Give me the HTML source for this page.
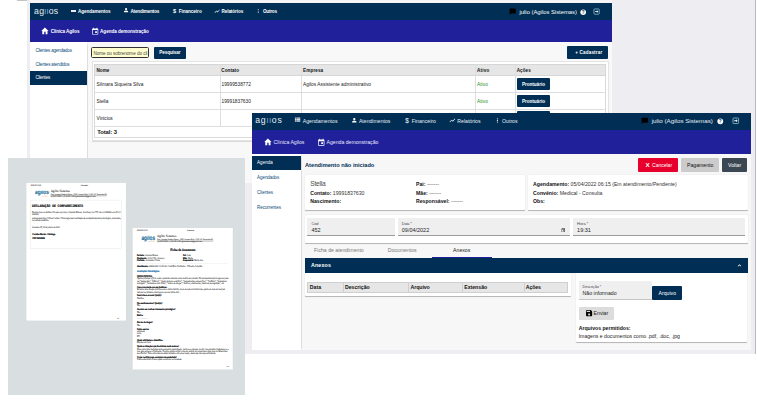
<!DOCTYPE html>
<html lang="pt-BR"><head><meta charset="utf-8"><title>Agilos</title>
<style>
html,body{margin:0;padding:0;background:#fff;}
body{width:757px;height:404px;position:relative;overflow:hidden;font-family:"Liberation Sans",sans-serif;}
main{display:block;position:absolute;left:0;top:0;width:757px;height:404px;overflow:hidden;}
main>div,main>svg{position:absolute;}
.t{white-space:nowrap;}
svg{overflow:visible;}
</style></head><body><main>
<div style="left:27.20px;top:0.00px;width:728.50px;height:353.70px;background:#ededf2;"></div>
<div style="left:755.00px;top:0.00px;width:0.90px;height:353.70px;background:#b9b9bd;"></div>
<div style="left:17.40px;top:0.00px;width:9.80px;height:1.20px;background:#c4c4c4;"></div>
<div style="left:30.00px;top:0.00px;width:582.00px;height:2.70px;background:#f5f5f8;"></div>
<div style="left:30.00px;top:3.00px;width:582.00px;height:180.00px;background:#f8f8f8;"></div>
<div style="left:30.00px;top:3.00px;width:582.00px;height:17.00px;background:#002e54;"></div>
<div style="left:30.00px;top:20.00px;width:582.00px;height:21.70px;background:#20209a;"></div>
<div style="left:30.00px;top:41.70px;width:57.40px;height:141.30px;background:#fff;box-shadow:0.6px 0 0.8px rgba(0,0,0,.10);"></div>
<div style="left:34.00px;top:9.13px;width:34.8px;height:7.48px;overflow:hidden"><div class="t" style="position:absolute;left:0;top:-3.13px;line-height:10.00px;font-size:8.7px;color:#e6edf3;font-weight:normal;letter-spacing:0.3px"><span>ag</span><span style="color:#86aacb">il</span><span>os</span></div></div>
<div style="left:70.60px;top:9.70px;width:5.60px;height:2.00px;background:#e8eef4;"></div>
<div class="t" style="left:78.00px;top:9.00px;line-height:5.00px;font-size:4.6px;color:#fff;font-weight:bold;letter-spacing:-0.062px;">Agendamentos</div>
<svg style="left:122.60px;top:7.30px;" width="6.20" height="6.20" viewBox="0 0 24 24"><path fill="#fff" d="M12 12c2.21 0 4-1.79 4-4s-1.790-4-4-4-4 1.790-4 4 1.790 4 4 4zm0 2c-2.670 0-8 1.340-8 4v2h16v-2c0-2.660-5.330-4-8-4z"/></svg>
<div class="t" style="left:130.40px;top:9.00px;line-height:5.00px;font-size:4.6px;color:#fff;font-weight:bold;letter-spacing:-0.149px;">Atendimentos</div>
<div class="t" style="left:74.50px;width:200px;text-align:center;top:8.00px;line-height:6.00px;font-size:5.6px;color:#fff;font-weight:bold;">$</div>
<div class="t" style="left:178.70px;top:9.00px;line-height:5.00px;font-size:4.6px;color:#fff;font-weight:bold;letter-spacing:-0.026px;">Financeiro</div>
<svg style="left:213.60px;top:7.60px;" width="6.40" height="6.40" viewBox="0 0 24 24"><path fill="#fff" d="M3.5 18.490l6-6.010 4 4L22 6.920l-1.410-1.410-7.090 7.970-4-4L2 16.990z"/></svg>
<div class="t" style="left:221.50px;top:9.00px;line-height:5.00px;font-size:4.6px;color:#fff;font-weight:bold;letter-spacing:-0.085px;">Relatórios</div>
<svg style="left:255.30px;top:7.70px;" width="6.40" height="6.40" viewBox="0 0 24 24"><path fill="#fff" d="M12 8c1.100 0 2-.9 2-2s-.9-2-2-2-2 .9-2 2 .9 2 2 2zm0 2c-1.100 0-2 .9-2 2s.9 2 2 2 2-.9 2-2-.9-2-2-2zm0 6c-1.100 0-2 .9-2 2s.9 2 2 2 2-.9 2-2-.9-2-2-2z"/></svg>
<div class="t" style="left:263.00px;top:9.00px;line-height:5.00px;font-size:4.6px;color:#fff;font-weight:bold;letter-spacing:-0.212px;">Outros</div>
<svg style="left:509.10px;top:8.10px;" width="7.40" height="7.40" viewBox="0 0 24 24"><path fill="#000" d="M20 2H4c-1.100 0-2 .9-2 2v18l4-4h14c1.100 0 2-.9 2-2V4c0-1.100-.9-2-2-2z"/></svg>
<div class="t" style="left:519.50px;top:9.00px;line-height:6.00px;font-size:5.84px;color:#fff;font-weight:normal;letter-spacing:0.003px;">julio (Agilos Sistemas)</div>
<svg style="left:580.00px;top:8.70px;" width="6.40" height="6.40" viewBox="0 0 24 24"><circle cx="12" cy="12" r="10.5" fill="#fff"/><text x="12" y="18" font-size="17" font-weight="bold" text-anchor="middle" fill="#002e54" font-family="Liberation Sans, sans-serif">?</text></svg>
<svg style="left:593.40px;top:8.20px;" width="7.20" height="7.20" viewBox="0 0 24 24"><rect x="3.2" y="3.2" width="17.6" height="17.6" rx="2.5" fill="none" stroke="#8fc3d6" stroke-width="2.6"/><path fill="#fff" d="M7 10.500h6V7.500l5 4.500-5 4.500v-3H7z"/></svg>
<svg style="left:41.00px;top:27.30px;" width="7.80" height="7.80" viewBox="0 0 24 24"><path fill="#fff" d="M12 1.500L0.800 12H4v10.500h5.800v-7.500h4.400v7.500H20V12h3.200z"/></svg>
<div class="t" style="left:50.70px;top:29.00px;line-height:5.00px;font-size:4.6px;color:#fff;font-weight:bold;letter-spacing:-0.109px;">Clínica Agilos</div>
<svg style="left:90.85px;top:26.95px;" width="8.30" height="8.30" viewBox="0 0 24 24"><path fill="#fff" d="M19 4h-1V2h-2v2H8V2H6v2H5c-1.110 0-2 .9-2 2v14c0 1.100.89 2 2 2h14c1.100 0 2-.9 2-2V6c0-1.100-.9-2-2-2zm0 16H5V9h14v11zm-2-3h-5v-5h5v5z" fill-rule="evenodd"/></svg>
<div class="t" style="left:100.10px;top:29.00px;line-height:5.00px;font-size:4.6px;color:#fff;font-weight:bold;letter-spacing:-0.041px;">Agenda demonstração</div>
<div class="t" style="left:35.40px;top:48.00px;line-height:5.00px;font-size:4.5px;color:#0b4a78;font-weight:normal;letter-spacing:-0.193px;">Clientes agendados</div>
<div class="t" style="left:35.40px;top:62.00px;line-height:5.00px;font-size:4.5px;color:#0b4a78;font-weight:normal;letter-spacing:-0.172px;">Clientes atendidos</div>
<div style="left:30.00px;top:71.20px;width:57.40px;height:13.60px;background:#002e54;"></div>
<div class="t" style="left:35.40px;top:75.00px;line-height:5.00px;font-size:4.5px;color:#fff;font-weight:normal;letter-spacing:-0.209px;">Clientes</div>
<div style="left:91.10px;top:47.40px;width:57.80px;height:10.50px;background:#ffffd0;border:0.7px solid #333;border-radius:1.6px;box-sizing:border-box;"></div>
<div class="t" style="left:93.50px;top:51.00px;line-height:5.00px;font-size:4.6px;color:#444;font-weight:normal;letter-spacing:-0.044px;">Nome ou sobrenome do cli</div>
<div style="left:153.70px;top:46.70px;width:32.50px;height:12.30px;background:#002e54;border-radius:1px;"></div>
<div class="t" style="left:159.20px;top:50.00px;line-height:5.00px;font-size:4.6px;color:#fff;font-weight:bold;letter-spacing:-0.071px;">Pesquisar</div>
<div style="left:567.40px;top:46.30px;width:40.80px;height:13.10px;background:#002e54;border-radius:1px;"></div>
<div class="t" style="left:575.30px;top:50.00px;line-height:5.00px;font-size:4.6px;color:#fff;font-weight:bold;letter-spacing:0.148px;">+ Cadastrar</div>
<div style="left:92.00px;top:61.30px;width:517.00px;height:79.90px;background:#fff;border:0.5px solid #e4e4e4;box-sizing:border-box;box-shadow:0 0.5px 0.6px rgba(0,0,0,.12);"></div>
<div style="left:94.30px;top:63.80px;width:511.60px;height:74.60px;background:#fff;border:0.5px solid #dadada;box-sizing:border-box;"></div>
<div style="left:94.30px;top:63.80px;width:511.60px;height:11.90px;background:#e6e6e6;border:0.5px solid #d6d6d6;box-sizing:border-box;"></div>
<div style="left:94.30px;top:92.20px;width:511.60px;height:0.50px;background:#dedede;"></div>
<div style="left:94.30px;top:109.20px;width:511.60px;height:0.50px;background:#dedede;"></div>
<div style="left:94.30px;top:126.20px;width:511.60px;height:0.50px;background:#dedede;"></div>
<div style="left:219.60px;top:63.80px;width:0.50px;height:62.40px;background:#dedede;"></div>
<div style="left:301.40px;top:63.80px;width:0.50px;height:62.40px;background:#dedede;"></div>
<div style="left:475.40px;top:63.80px;width:0.50px;height:62.40px;background:#dedede;"></div>
<div style="left:515.00px;top:63.80px;width:0.50px;height:62.40px;background:#dedede;"></div>
<div class="t" style="left:96.50px;top:68.00px;line-height:5.00px;font-size:4.6px;color:#111;font-weight:bold;letter-spacing:0.011px;">Nome</div>
<div class="t" style="left:221.30px;top:68.00px;line-height:5.00px;font-size:4.6px;color:#111;font-weight:bold;letter-spacing:0.057px;">Contato</div>
<div class="t" style="left:303.10px;top:68.00px;line-height:5.00px;font-size:4.6px;color:#111;font-weight:bold;letter-spacing:0.113px;">Empresa</div>
<div class="t" style="left:476.90px;top:68.00px;line-height:5.00px;font-size:4.6px;color:#111;font-weight:bold;letter-spacing:0.204px;">Ativo</div>
<div class="t" style="left:516.70px;top:68.00px;line-height:5.00px;font-size:4.6px;color:#111;font-weight:bold;letter-spacing:0.076px;">Ações</div>
<div class="t" style="left:96.60px;top:82.00px;line-height:5.00px;font-size:4.8px;color:#1a1a1a;font-weight:normal;letter-spacing:-0.007px;">Silmara Siqueira Silva</div>
<div class="t" style="left:221.50px;top:82.00px;line-height:5.00px;font-size:4.8px;color:#1a1a1a;font-weight:normal;letter-spacing:0.004px;">19999538772</div>
<div class="t" style="left:303.00px;top:82.00px;line-height:5.00px;font-size:4.8px;color:#1a1a1a;font-weight:normal;letter-spacing:0.026px;">Agilos Assistente administrativo</div>
<div class="t" style="left:476.90px;top:82.00px;line-height:5.00px;font-size:4.8px;color:#1f8f1f;font-weight:normal;letter-spacing:0.082px;">Ativo</div>
<div class="t" style="left:96.60px;top:99.00px;line-height:5.00px;font-size:4.8px;color:#1a1a1a;font-weight:normal;letter-spacing:-0.060px;">Stella</div>
<div class="t" style="left:221.50px;top:99.00px;line-height:5.00px;font-size:4.8px;color:#1a1a1a;font-weight:normal;letter-spacing:0.004px;">19991837630</div>
<div class="t" style="left:476.90px;top:99.00px;line-height:5.00px;font-size:4.8px;color:#1f8f1f;font-weight:normal;letter-spacing:0.082px;">Ativo</div>
<div class="t" style="left:96.60px;top:116.00px;line-height:5.00px;font-size:4.8px;color:#1a1a1a;font-weight:normal;letter-spacing:-0.050px;">Vinicius</div>
<div style="left:517.10px;top:78.30px;width:33.40px;height:12.20px;background:#002e54;border-radius:1px;"></div>
<div class="t" style="left:521.90px;top:82.00px;line-height:5.00px;font-size:4.6px;color:#fff;font-weight:bold;letter-spacing:-0.015px;">Prontuário</div>
<div style="left:517.10px;top:95.20px;width:33.40px;height:12.00px;background:#002e54;border-radius:1px;"></div>
<div class="t" style="left:521.90px;top:99.00px;line-height:5.00px;font-size:4.6px;color:#fff;font-weight:bold;letter-spacing:-0.015px;">Prontuário</div>
<div style="left:517.10px;top:111.20px;width:33.40px;height:12.00px;background:#002e54;border-radius:1px;"></div>
<div class="t" style="left:521.90px;top:115.00px;line-height:5.00px;font-size:4.6px;color:#fff;font-weight:bold;letter-spacing:-0.015px;">Prontuário</div>
<div class="t" style="left:97.20px;top:129.00px;line-height:6.00px;font-size:5.9px;color:#111;font-weight:bold;letter-spacing:-0.102px;">Total: 3</div>
<div style="left:8.30px;top:158.00px;width:236.70px;height:237.00px;background:#d9dfe1;"></div>
<svg style="left:0;top:0" width="757" height="404" viewBox="0 0 757 404" text-rendering="geometricPrecision"><rect x="26.10" y="182.70" width="100.00" height="138.20" fill="#fff" stroke="#c9cfd0" stroke-width="0.3"/>
<text x="30.80" y="186.34" font-size="2.0" font-family="Liberation Sans, sans-serif" font-weight="normal" fill="#333" textLength="10.30" lengthAdjust="spacingAndGlyphs"  stroke="#333" stroke-width="0.06">09/04/2022 19:30</text>
<text x="80.80" y="186.34" font-size="2.0" font-family="Liberation Sans, sans-serif" font-weight="normal" fill="#333" textLength="7.10" lengthAdjust="spacingAndGlyphs"  stroke="#333" stroke-width="0.06">Atestado</text>
<clipPath id="lc0"><rect x="34.00" y="190.70" width="16" height="6"/></clipPath>
<g clip-path="url(#lc0)">
<text x="35.10" y="194.48" font-size="6.6" font-family="Liberation Sans, sans-serif" font-weight="bold" fill="#1a6e9c" textLength="13.70" lengthAdjust="spacingAndGlyphs"  stroke="#1a6e9c" stroke-width="0.16">agilos</text>
</g>
<rect x="41.50" y="195.90" width="7.00" height="0.40" fill="#d9b98a" />
<text x="50.70" y="191.82" font-size="3.4" font-family="Liberation Serif, serif" font-weight="normal" fill="#111" textLength="19.30" lengthAdjust="spacingAndGlyphs"  stroke="#111" stroke-width="0.06">Agilos Sistemas</text>
<text x="50.70" y="194.82" font-size="2.3" font-family="Liberation Serif, serif" font-weight="normal" fill="#222" textLength="56.20" lengthAdjust="spacingAndGlyphs" text-decoration="underline" stroke="#222" stroke-width="0.06">Rua Leandro Sodero Busin, 1000 Campo Belo 13.00.147 Sorocaba-SP</text>
<text x="50.70" y="196.92" font-size="2.3" font-family="Liberation Serif, serif" font-weight="normal" fill="#222" textLength="45.10" lengthAdjust="spacingAndGlyphs"  stroke="#222" stroke-width="0.06">(15)99754050 / (15)9120-1140 agilossistemas@gmail.com</text>
<rect x="30.80" y="200.10" width="90.70" height="48.60" fill="none" stroke="#dcdcdc" stroke-width="0.35"/>
<text x="32.10" y="207.07" font-size="3.6" font-family="Liberation Mono, monospace" font-weight="bold" fill="#111" textLength="51.00" lengthAdjust="spacingAndGlyphs"  stroke="#111" stroke-width="0.16">DECLARAÇÃO DE COMPARECIMENTO</text>
<text x="32.10" y="212.98" font-size="2.5" font-family="Liberation Serif, serif" font-weight="normal" fill="#2a2a2a" textLength="88.80" lengthAdjust="spacingAndGlyphs"  stroke="#2a2a2a" stroke-width="0.06">Declaro para os devidos fins que o(a) Sr(a). Amanda Moraes, inscrito(a) no CPF sob o nº000000 e no RG nº</text>
<text x="32.10" y="215.08" font-size="2.5" font-family="Liberation Serif, serif" font-weight="normal" fill="#2a2a2a" textLength="6.70" lengthAdjust="spacingAndGlyphs"  stroke="#2a2a2a" stroke-width="0.06">0000000,</text>
<text x="32.10" y="218.58" font-size="2.5" font-family="Liberation Serif, serif" font-weight="normal" fill="#2a2a2a" textLength="88.80" lengthAdjust="spacingAndGlyphs"  stroke="#2a2a2a" stroke-width="0.06">compareceu à/ao Clínica Central / Psicologia para realização de acompanhamento psicológico, nesta data,</text>
<text x="32.10" y="221.08" font-size="2.5" font-family="Liberation Serif, serif" font-weight="normal" fill="#2a2a2a" textLength="16.90" lengthAdjust="spacingAndGlyphs"  stroke="#2a2a2a" stroke-width="0.06">no período matutino.</text>
<text x="32.10" y="228.48" font-size="2.5" font-family="Liberation Serif, serif" font-weight="normal" fill="#2a2a2a" textLength="28.10" lengthAdjust="spacingAndGlyphs"  stroke="#2a2a2a" stroke-width="0.06">Sorocaba-SP, 09 de janeiro de 2023.</text>
<text x="32.30" y="235.08" font-size="2.5" font-family="Liberation Serif, serif" font-weight="bold" fill="#000" textLength="22.90" lengthAdjust="spacingAndGlyphs"  stroke="#000" stroke-width="0.16">Carolina Morais - Psicóloga</text>
<text x="32.30" y="239.48" font-size="2.5" font-family="Liberation Serif, serif" font-weight="bold" fill="#000" textLength="12.50" lengthAdjust="spacingAndGlyphs"  stroke="#000" stroke-width="0.16">CRP 00/00000</text>
<text x="117.00" y="318.70" font-size="1.5" font-family="Liberation Sans, sans-serif" font-weight="normal" fill="#666" textLength="2.20" lengthAdjust="spacingAndGlyphs"  stroke="#666" stroke-width="0.06">1/1</text>
<rect x="132.40" y="227.80" width="100.60" height="142.00" fill="#fff" stroke="#c9cfd0" stroke-width="0.3"/>
<text x="137.10" y="231.44" font-size="2.0" font-family="Liberation Sans, sans-serif" font-weight="normal" fill="#333" textLength="10.30" lengthAdjust="spacingAndGlyphs"  stroke="#333" stroke-width="0.06">09/04/2022 19:29</text>
<text x="187.10" y="231.44" font-size="2.0" font-family="Liberation Sans, sans-serif" font-weight="normal" fill="#333" textLength="7.10" lengthAdjust="spacingAndGlyphs"  stroke="#333" stroke-width="0.06">Anamnese</text>
<clipPath id="lc106"><rect x="140.30" y="235.80" width="16" height="6"/></clipPath>
<g clip-path="url(#lc106)">
<text x="141.40" y="239.58" font-size="6.6" font-family="Liberation Sans, sans-serif" font-weight="bold" fill="#1a6e9c" textLength="13.70" lengthAdjust="spacingAndGlyphs"  stroke="#1a6e9c" stroke-width="0.16">agilos</text>
</g>
<rect x="147.80" y="241.00" width="7.00" height="0.40" fill="#d9b98a" />
<text x="157.00" y="236.92" font-size="3.4" font-family="Liberation Serif, serif" font-weight="normal" fill="#111" textLength="19.30" lengthAdjust="spacingAndGlyphs"  stroke="#111" stroke-width="0.06">Agilos Sistemas</text>
<text x="157.00" y="239.92" font-size="2.3" font-family="Liberation Serif, serif" font-weight="normal" fill="#222" textLength="56.20" lengthAdjust="spacingAndGlyphs" text-decoration="underline" stroke="#222" stroke-width="0.06">Rua Leandro Sodero Busin, 1000 Campo Belo 13.00.147 Sorocaba-SP</text>
<text x="157.00" y="242.02" font-size="2.3" font-family="Liberation Serif, serif" font-weight="normal" fill="#222" textLength="45.10" lengthAdjust="spacingAndGlyphs"  stroke="#222" stroke-width="0.06">(15)99754050 / (15)9120-1140 agilossistemas@gmail.com</text>
<text x="170.20" y="251.25" font-size="3.5" font-family="Liberation Serif, serif" font-weight="bold" fill="#111" textLength="25.10" lengthAdjust="spacingAndGlyphs"  stroke="#111" stroke-width="0.16">Ficha de Anamnese</text>
<text x="136.90" y="256.38" font-size="2.5" font-family="Liberation Serif, serif" font-weight="bold" fill="#000" textLength="7.60" lengthAdjust="spacingAndGlyphs"  stroke="#000" stroke-width="0.16">Paciente:</text>
<text x="145.10" y="256.38" font-size="2.5" font-family="Liberation Serif, serif" font-weight="normal" fill="#2a2a2a" textLength="13.00" lengthAdjust="spacingAndGlyphs"  stroke="#2a2a2a" stroke-width="0.06">Amanda Moraes</text>
<text x="136.90" y="258.98" font-size="2.5" font-family="Liberation Serif, serif" font-weight="bold" fill="#000" textLength="10.00" lengthAdjust="spacingAndGlyphs"  stroke="#000" stroke-width="0.16">Nascimento:</text>
<text x="147.50" y="258.98" font-size="2.5" font-family="Liberation Serif, serif" font-weight="normal" fill="#2a2a2a" textLength="17.00" lengthAdjust="spacingAndGlyphs"  stroke="#2a2a2a" stroke-width="0.06">21/01/1993 / 30 ano(s)</text>
<text x="136.90" y="261.48" font-size="2.5" font-family="Liberation Serif, serif" font-weight="bold" fill="#000" textLength="8.00" lengthAdjust="spacingAndGlyphs"  stroke="#000" stroke-width="0.16">Profissão:</text>
<text x="145.50" y="261.48" font-size="2.5" font-family="Liberation Serif, serif" font-weight="normal" fill="#2a2a2a" textLength="14.50" lengthAdjust="spacingAndGlyphs"  stroke="#2a2a2a" stroke-width="0.06">Assistente Clínica</text>
<text x="183.10" y="256.38" font-size="2.5" font-family="Liberation Serif, serif" font-weight="bold" fill="#000" textLength="3.40" lengthAdjust="spacingAndGlyphs"  stroke="#000" stroke-width="0.16">Pai:</text>
<text x="187.10" y="256.38" font-size="2.5" font-family="Liberation Serif, serif" font-weight="normal" fill="#2a2a2a" textLength="3.80" lengthAdjust="spacingAndGlyphs"  stroke="#2a2a2a" stroke-width="0.06">João</text>
<text x="183.10" y="258.98" font-size="2.5" font-family="Liberation Serif, serif" font-weight="bold" fill="#000" textLength="4.20" lengthAdjust="spacingAndGlyphs"  stroke="#000" stroke-width="0.16">Mãe:</text>
<text x="187.90" y="258.98" font-size="2.5" font-family="Liberation Serif, serif" font-weight="normal" fill="#2a2a2a" textLength="5.00" lengthAdjust="spacingAndGlyphs"  stroke="#2a2a2a" stroke-width="0.06">Maria</text>
<text x="183.10" y="261.48" font-size="2.5" font-family="Liberation Serif, serif" font-weight="bold" fill="#000" textLength="10.60" lengthAdjust="spacingAndGlyphs"  stroke="#000" stroke-width="0.16">Responsável:</text>
<text x="194.30" y="261.48" font-size="2.5" font-family="Liberation Serif, serif" font-weight="normal" fill="#2a2a2a" textLength="8.60" lengthAdjust="spacingAndGlyphs"  stroke="#2a2a2a" stroke-width="0.06">Maria Ana</text>
<rect x="136.90" y="263.30" width="91.50" height="0.30" fill="#dddddd" />
<text x="136.90" y="267.28" font-size="2.5" font-family="Liberation Serif, serif" font-weight="bold" fill="#000" textLength="11.60" lengthAdjust="spacingAndGlyphs"  stroke="#000" stroke-width="0.16">Atendimento:</text>
<text x="149.10" y="267.28" font-size="2.5" font-family="Liberation Serif, serif" font-weight="normal" fill="#2a2a2a" textLength="53.20" lengthAdjust="spacingAndGlyphs"  stroke="#2a2a2a" stroke-width="0.06">04/08/2022 12:29:00 / Convênio: Particular - Primeira Consulta</text>
<text x="136.90" y="272.38" font-size="2.5" font-family="Liberation Sans, sans-serif" font-weight="bold" fill="#1b6fa8" textLength="22.40" lengthAdjust="spacingAndGlyphs"  stroke="#1b6fa8" stroke-width="0.16">Avaliação Psicológica</text>
<text x="136.90" y="276.78" font-size="2.5" font-family="Liberation Serif, serif" font-weight="bold" fill="#000" textLength="15.70" lengthAdjust="spacingAndGlyphs"  stroke="#000" stroke-width="0.16">QUEIXA PRINCIPAL:</text>
<text x="136.90" y="279.18" font-size="2.5" font-family="Liberation Serif, serif" font-weight="normal" fill="#2a2a2a" textLength="91.50" lengthAdjust="spacingAndGlyphs"  stroke="#2a2a2a" stroke-width="0.06">Queixa principal (QP) é o que o paciente comenta como motivo da consulta. No psicopatoma/psicologia ele pode</text>
<text x="136.90" y="281.68" font-size="2.5" font-family="Liberation Serif, serif" font-weight="normal" fill="#2a2a2a" textLength="90.00" lengthAdjust="spacingAndGlyphs"  stroke="#2a2a2a" stroke-width="0.06">ser &quot;depressão&quot;, &quot;pânico&quot;, &quot;angst ansiosa e delírio&quot;, &quot;pensamentos obsessivos&quot;, &quot;insônia&quot;, &quot;problemas</text>
<text x="136.90" y="284.28" font-size="2.5" font-family="Liberation Serif, serif" font-weight="normal" fill="#2a2a2a" textLength="87.50" lengthAdjust="spacingAndGlyphs"  stroke="#2a2a2a" stroke-width="0.06">conjugais&quot;, &quot;problemas com filhos&quot;, &quot;abuso de drogas&quot;, &quot;delírios, alucinações, ideias de perseguição&quot;, etc.</text>
<text x="136.90" y="288.07" font-size="2.5" font-family="Liberation Serif, serif" font-weight="bold" fill="#000" textLength="30.10" lengthAdjust="spacingAndGlyphs"  stroke="#000" stroke-width="0.16">Como é sua relação com seus familiares:</text>
<text x="136.90" y="290.48" font-size="2.5" font-family="Liberation Serif, serif" font-weight="normal" fill="#2a2a2a" textLength="88.50" lengthAdjust="spacingAndGlyphs"  stroke="#2a2a2a" stroke-width="0.06">Eu tenho uma relação próxima com a minha família, moro do lado de minha mãe, quatro do lado de meu pai.</text>
<text x="136.90" y="292.57" font-size="2.5" font-family="Liberation Serif, serif" font-weight="normal" fill="#2a2a2a" textLength="43.60" lengthAdjust="spacingAndGlyphs"  stroke="#2a2a2a" stroke-width="0.06">Sempre nos juntamos domingo na casa da minha Avó...</text>
<text x="136.90" y="296.38" font-size="2.5" font-family="Liberation Serif, serif" font-weight="bold" fill="#000" textLength="24.60" lengthAdjust="spacingAndGlyphs"  stroke="#000" stroke-width="0.16">Possui crianca ou recem? Qual(is)?</text>
<text x="136.90" y="298.57" font-size="2.5" font-family="Liberation Serif, serif" font-weight="normal" fill="#2a2a2a" textLength="6.90" lengthAdjust="spacingAndGlyphs"  stroke="#2a2a2a" stroke-width="0.06">Nenhuma</text>
<text x="136.90" y="303.68" font-size="2.5" font-family="Liberation Serif, serif" font-weight="bold" fill="#000" textLength="25.60" lengthAdjust="spacingAndGlyphs"  stroke="#000" stroke-width="0.16">Usa medicamentos? Qual(is)?</text>
<text x="136.90" y="305.98" font-size="2.5" font-family="Liberation Serif, serif" font-weight="normal" fill="#2a2a2a" textLength="3.30" lengthAdjust="spacingAndGlyphs"  stroke="#2a2a2a" stroke-width="0.06">Não</text>
<text x="136.90" y="309.98" font-size="2.5" font-family="Liberation Serif, serif" font-weight="bold" fill="#000" textLength="38.60" lengthAdjust="spacingAndGlyphs"  stroke="#000" stroke-width="0.16">Já esteve em você em tratamento psicológico?</text>
<text x="136.90" y="312.57" font-size="2.5" font-family="Liberation Serif, serif" font-weight="normal" fill="#2a2a2a" textLength="3.30" lengthAdjust="spacingAndGlyphs"  stroke="#2a2a2a" stroke-width="0.06">Não</text>
<text x="136.90" y="316.48" font-size="2.5" font-family="Liberation Serif, serif" font-weight="bold" fill="#000" textLength="6.30" lengthAdjust="spacingAndGlyphs"  stroke="#000" stroke-width="0.16">Motivo:</text>
<text x="136.90" y="319.07" font-size="2.5" font-family="Liberation Serif, serif" font-weight="normal" fill="#2a2a2a" textLength="10.60" lengthAdjust="spacingAndGlyphs"  stroke="#2a2a2a" stroke-width="0.06">-----------------</text>
<text x="136.90" y="323.07" font-size="2.5" font-family="Liberation Serif, serif" font-weight="bold" fill="#000" textLength="15.90" lengthAdjust="spacingAndGlyphs"  stroke="#000" stroke-width="0.16">Faz uso de drogas?</text>
<text x="136.90" y="325.68" font-size="2.5" font-family="Liberation Serif, serif" font-weight="normal" fill="#2a2a2a" textLength="3.30" lengthAdjust="spacingAndGlyphs"  stroke="#2a2a2a" stroke-width="0.06">Não</text>
<text x="136.90" y="329.57" font-size="2.5" font-family="Liberation Serif, serif" font-weight="bold" fill="#000" textLength="12.30" lengthAdjust="spacingAndGlyphs"  stroke="#000" stroke-width="0.16">Pratica esportes:</text>
<text x="136.90" y="331.98" font-size="2.5" font-family="Liberation Serif, serif" font-weight="normal" fill="#2a2a2a" textLength="8.10" lengthAdjust="spacingAndGlyphs"  stroke="#2a2a2a" stroke-width="0.06">caminhada,</text>
<text x="136.90" y="334.38" font-size="2.5" font-family="Liberation Serif, serif" font-weight="normal" fill="#2a2a2a" textLength="4.60" lengthAdjust="spacingAndGlyphs"  stroke="#2a2a2a" stroke-width="0.06">corrida,</text>
<text x="136.90" y="336.68" font-size="2.5" font-family="Liberation Serif, serif" font-weight="normal" fill="#2a2a2a" textLength="3.70" lengthAdjust="spacingAndGlyphs"  stroke="#2a2a2a" stroke-width="0.06">ETC.</text>
<text x="136.90" y="340.68" font-size="2.5" font-family="Liberation Serif, serif" font-weight="bold" fill="#000" textLength="26.10" lengthAdjust="spacingAndGlyphs"  stroke="#000" stroke-width="0.16">Quais atividades o identifica:</text>
<text x="136.90" y="343.07" font-size="2.5" font-family="Liberation Serif, serif" font-weight="normal" fill="#2a2a2a" textLength="13.90" lengthAdjust="spacingAndGlyphs"  stroke="#2a2a2a" stroke-width="0.06">Esportes em Geral</text>
<text x="136.90" y="347.38" font-size="2.5" font-family="Liberation Serif, serif" font-weight="bold" fill="#000" textLength="42.10" lengthAdjust="spacingAndGlyphs"  stroke="#000" stroke-width="0.16">Quais as situações que lhe deixam mais ansioso?</text>
<text x="136.90" y="349.57" font-size="2.5" font-family="Liberation Serif, serif" font-weight="normal" fill="#2a2a2a" textLength="91.50" lengthAdjust="spacingAndGlyphs"  stroke="#2a2a2a" stroke-width="0.06">Uma coisa vem mexendo eu me encontro desanimado, nervoso e cansado. Assim, me encontro inquieto(a) e a</text>
<text x="136.90" y="351.78" font-size="2.5" font-family="Liberation Serif, serif" font-weight="normal" fill="#2a2a2a" textLength="90.70" lengthAdjust="spacingAndGlyphs"  stroke="#2a2a2a" stroke-width="0.06">isso gera estresse e frustração. Procuro sempre evitar o uso do celular por onde passo uma hora no Meet antes</text>
<text x="136.90" y="354.18" font-size="2.5" font-family="Liberation Serif, serif" font-weight="normal" fill="#2a2a2a" textLength="79.10" lengthAdjust="spacingAndGlyphs"  stroke="#2a2a2a" stroke-width="0.06">de o Dormir. Tomo chá antes de deitar também e uma boa noção, desde que não seja estimulante.</text>
<text x="136.90" y="358.28" font-size="2.5" font-family="Liberation Serif, serif" font-weight="bold" fill="#000" textLength="39.90" lengthAdjust="spacingAndGlyphs"  stroke="#000" stroke-width="0.16">O que você faz para controlar sua ansiedade?</text>
<text x="136.90" y="360.48" font-size="2.5" font-family="Liberation Serif, serif" font-weight="normal" fill="#2a2a2a" textLength="45.00" lengthAdjust="spacingAndGlyphs"  stroke="#2a2a2a" stroke-width="0.06">Pratico exercícios físicos ajuda a controlar a ansiedade.</text>
<text x="226.60" y="367.30" font-size="1.5" font-family="Liberation Sans, sans-serif" font-weight="normal" fill="#666" textLength="2.40" lengthAdjust="spacingAndGlyphs"  stroke="#666" stroke-width="0.06">1/1</text></svg>
<div style="left:251.50px;top:113.00px;width:499.90px;height:236.80px;background:#f7f7f7;"></div>
<div style="left:251.50px;top:113.00px;width:499.90px;height:17.30px;background:#002e54;"></div>
<div style="left:251.50px;top:130.30px;width:499.90px;height:23.30px;background:#20209a;"></div>
<div style="left:251.50px;top:153.60px;width:49.50px;height:196.20px;background:#fff;box-shadow:0.6px 0 0.8px rgba(0,0,0,.10);"></div>
<div style="left:255.20px;top:118.13px;width:34.8px;height:7.48px;overflow:hidden"><div class="t" style="position:absolute;left:0;top:-3.13px;line-height:10.00px;font-size:8.7px;color:#e6edf3;font-weight:normal;letter-spacing:0.78px"><span>ag</span><span style="color:#86aacb">il</span><span>os</span></div></div>
<svg style="left:294.40px;top:116.30px;" width="7.20" height="7.20" viewBox="0 0 24 24"><path fill="#cfd9e2" d="M3 5h5v4H3zm6 0h12v4H9zM3 10h5v4H3zm6 0h12v4H9zM3 15h5v4H3zm6 0h12v4H9z"/></svg>
<div class="t" style="left:302.80px;top:118.00px;line-height:6.00px;font-size:5.17px;color:#e6edf3;font-weight:normal;">Agendamentos</div>
<svg style="left:350.90px;top:116.90px;" width="6.60" height="6.60" viewBox="0 0 24 24"><path fill="#fff" d="M12 12c2.21 0 4-1.79 4-4s-1.790-4-4-4-4 1.790-4 4 1.790 4 4 4zm0 2c-2.670 0-8 1.340-8 4v2h16v-2c0-2.660-5.330-4-8-4z"/></svg>
<div class="t" style="left:358.90px;top:118.00px;line-height:6.00px;font-size:5.17px;color:#e6edf3;font-weight:normal;">Atendimentos</div>
<div class="t" style="left:307.00px;width:200px;text-align:center;top:117.00px;line-height:7.00px;font-size:6.4px;color:#fff;font-weight:normal;">$</div>
<div class="t" style="left:411.80px;top:118.00px;line-height:6.00px;font-size:5.17px;color:#e6edf3;font-weight:normal;">Financeiro</div>
<svg style="left:449.10px;top:117.20px;" width="6.80" height="6.80" viewBox="0 0 24 24"><path fill="#fff" d="M3.5 18.490l6-6.010 4 4L22 6.920l-1.410-1.410-7.090 7.970-4-4L2 16.990z"/></svg>
<div class="t" style="left:457.30px;top:118.00px;line-height:6.00px;font-size:5.17px;color:#e6edf3;font-weight:normal;">Relatórios</div>
<svg style="left:493.60px;top:117.40px;" width="6.80" height="6.80" viewBox="0 0 24 24"><path fill="#fff" d="M12 8c1.100 0 2-.9 2-2s-.9-2-2-2-2 .9-2 2 .9 2 2 2zm0 2c-1.100 0-2 .9-2 2s.9 2 2 2 2-.9 2-2-.9-2-2-2zm0 6c-1.100 0-2 .9-2 2s.9 2 2 2 2-.9 2-2-.9-2-2-2z"/></svg>
<div class="t" style="left:502.10px;top:118.00px;line-height:6.00px;font-size:5.17px;color:#e6edf3;font-weight:normal;">Outros</div>
<svg style="left:641.40px;top:117.20px;" width="7.60" height="7.60" viewBox="0 0 24 24"><path fill="#000" d="M20 2H4c-1.100 0-2 .9-2 2v18l4-4h14c1.100 0 2-.9 2-2V4c0-1.100-.9-2-2-2z"/></svg>
<div class="t" style="left:651.70px;top:117.00px;line-height:7.00px;font-size:6.23px;color:#e8eef4;font-weight:normal;">julio (Agilos Sistemas)</div>
<svg style="left:717.00px;top:117.90px;" width="6.60" height="6.60" viewBox="0 0 24 24"><circle cx="12" cy="12" r="10.5" fill="#fff"/><text x="12" y="18" font-size="17" font-weight="bold" text-anchor="middle" fill="#002e54" font-family="Liberation Sans, sans-serif">?</text></svg>
<svg style="left:731.70px;top:117.40px;" width="7.60" height="7.60" viewBox="0 0 24 24"><rect x="3.2" y="3.2" width="17.6" height="17.6" rx="2.5" fill="none" stroke="#8fc3d6" stroke-width="2.6"/><path fill="#fff" d="M7 10.500h6V7.500l5 4.500-5 4.500v-3H7z"/></svg>
<svg style="left:263.50px;top:138.40px;" width="7.80" height="7.80" viewBox="0 0 24 24"><path fill="#fff" d="M12 1.500L0.800 12H4v10.500h5.800v-7.500h4.400v7.500H20V12h3.200z"/></svg>
<div class="t" style="left:273.50px;top:139.00px;line-height:6.00px;font-size:5.17px;color:#e8e8ff;font-weight:normal;">Clínica Agilos</div>
<svg style="left:316.55px;top:137.65px;" width="8.50" height="8.50" viewBox="0 0 24 24"><path fill="#fff" d="M19 4h-1V2h-2v2H8V2H6v2H5c-1.110 0-2 .9-2 2v14c0 1.100.89 2 2 2h14c1.100 0 2-.9 2-2V6c0-1.100-.9-2-2-2zm0 16H5V9h14v11zm-2-3h-5v-5h5v5z" fill-rule="evenodd"/></svg>
<div class="t" style="left:326.50px;top:139.00px;line-height:6.00px;font-size:5.17px;color:#e8e8ff;font-weight:normal;">Agenda demonstração</div>
<div style="left:251.50px;top:155.60px;width:49.20px;height:14.60px;background:#002e54;"></div>
<div class="t" style="left:257.10px;top:160.00px;line-height:5.00px;font-size:4.5px;color:#fff;font-weight:normal;letter-spacing:0.017px;">Agenda</div>
<div class="t" style="left:257.10px;top:175.00px;line-height:5.00px;font-size:4.5px;color:#0b4a78;font-weight:normal;letter-spacing:-0.073px;">Agendados</div>
<div class="t" style="left:257.10px;top:190.00px;line-height:5.00px;font-size:4.5px;color:#0b4a78;font-weight:normal;letter-spacing:-0.052px;">Clientes</div>
<div class="t" style="left:257.10px;top:205.00px;line-height:5.00px;font-size:4.5px;color:#0b4a78;font-weight:normal;letter-spacing:-0.072px;">Recorrentes</div>
<div class="t" style="left:305.00px;top:162.00px;line-height:6.00px;font-size:5.68px;color:#002e54;font-weight:bold;">Atendimento não iniciado</div>
<div style="left:637.50px;top:158.20px;width:40.70px;height:14.00px;background:#e8002d;border-radius:1px;"></div>
<div class="t" style="left:547.60px;width:200px;text-align:center;top:161.00px;line-height:7.00px;font-size:6.2px;color:#fff;font-weight:bold;">X</div>
<div class="t" style="left:652.00px;top:162.00px;line-height:6.00px;font-size:5.17px;color:#fff;font-weight:normal;letter-spacing:-0.077px;">Cancelar</div>
<div style="left:681.00px;top:158.20px;width:38.40px;height:14.00px;background:#cbcbcb;border-radius:1px;"></div>
<div class="t" style="left:600.20px;width:200px;text-align:center;top:162.00px;line-height:6.00px;font-size:5.17px;color:#111;font-weight:normal;">Pagamento</div>
<div style="left:722.10px;top:158.20px;width:25.00px;height:14.00px;background:#3a4753;border-radius:1px;"></div>
<div class="t" style="left:634.60px;width:200px;text-align:center;top:162.00px;line-height:6.00px;font-size:5.17px;color:#fff;font-weight:normal;">Voltar</div>
<div style="left:305.00px;top:175.40px;width:219.90px;height:34.80px;background:#fff;box-shadow:0 0.6px 0.8px rgba(0,0,0,.27);border-radius:0.8px;"></div>
<div style="left:528.00px;top:175.40px;width:219.50px;height:34.80px;background:#fff;box-shadow:0 0.6px 0.8px rgba(0,0,0,.27);border-radius:0.8px;"></div>
<div class="t" style="left:310.20px;top:180.00px;line-height:7.00px;font-size:6.6px;color:#4a4a4a;font-weight:normal;letter-spacing:-0.200px;">Stella</div>
<div class="t" style="left:310.20px;top:190.00px;line-height:6.00px;font-size:5.16px;color:#333;font-weight:normal;"><b style="color:#111">Contato:</b> 19991837630</div>
<div class="t" style="left:310.20px;top:198.00px;line-height:6.00px;font-size:5.16px;color:#333;font-weight:normal;"><b style="color:#111">Nascimento:</b> </div>
<div class="t" style="left:416.00px;top:181.00px;line-height:6.00px;font-size:5.16px;color:#333;font-weight:normal;"><b style="color:#111">Pai:</b> -------</div>
<div class="t" style="left:416.00px;top:190.00px;line-height:6.00px;font-size:5.16px;color:#333;font-weight:normal;"><b style="color:#111">Mãe:</b> -------</div>
<div class="t" style="left:416.00px;top:198.00px;line-height:6.00px;font-size:5.16px;color:#333;font-weight:normal;"><b style="color:#111">Responsável:</b> -------</div>
<div class="t" style="left:533.10px;top:181.00px;line-height:6.00px;font-size:5.16px;color:#333;font-weight:normal;"><b style="color:#111">Agendamento:</b> 05/04/2022 06:15 (Em atendimento/Pendente)</div>
<div class="t" style="left:533.10px;top:190.00px;line-height:6.00px;font-size:5.16px;color:#333;font-weight:normal;"><b style="color:#111">Convênio:</b> Medical - Consulta</div>
<div class="t" style="left:533.10px;top:198.00px;line-height:6.00px;font-size:5.16px;color:#333;font-weight:normal;"><b style="color:#111">Obs:</b> </div>
<div style="left:305.00px;top:215.30px;width:442.50px;height:27.70px;background:#fff;box-shadow:0 0.6px 0.8px rgba(0,0,0,.27);border-radius:0.8px;"></div>
<div style="left:307.40px;top:218.00px;width:87.50px;height:18.40px;background:#efefef;border-bottom:0.8px solid #9c9c9c;box-sizing:border-box;"></div>
<div class="t" style="left:311.40px;top:221.00px;line-height:5.00px;font-size:3.9px;color:#4a4450;font-weight:normal;letter-spacing:-0.020px;">Cod</div>
<div class="t" style="left:311.40px;top:227.00px;line-height:6.00px;font-size:5.47px;color:#222;font-weight:normal;">452</div>
<div style="left:397.80px;top:218.00px;width:172.40px;height:18.40px;background:#efefef;border-bottom:0.8px solid #9c9c9c;box-sizing:border-box;"></div>
<div class="t" style="left:401.80px;top:221.00px;line-height:5.00px;font-size:3.9px;color:#4a4450;font-weight:normal;letter-spacing:-0.166px;">Data *</div>
<div class="t" style="left:401.80px;top:227.00px;line-height:6.00px;font-size:5.47px;color:#222;font-weight:normal;">09/04/2022</div>
<div style="left:573.10px;top:218.00px;width:172.00px;height:18.40px;background:#efefef;border-bottom:0.8px solid #9c9c9c;box-sizing:border-box;"></div>
<div class="t" style="left:577.10px;top:221.00px;line-height:5.00px;font-size:3.9px;color:#4a4450;font-weight:normal;letter-spacing:0.014px;">Hora *</div>
<div class="t" style="left:577.10px;top:227.00px;line-height:6.00px;font-size:5.47px;color:#222;font-weight:normal;">19:31</div>
<svg style="left:561.00px;top:227.70px;" width="4.60" height="4.60" viewBox="0 0 24 24"><path fill="#222" d="M17 12h-5v5h5v-5zM16 1v2H8V1H6v2H5c-1.110 0-2 .9-2 2v14c0 1.100.89 2 2 2h14c1.100 0 2-.9 2-2V5c0-1.100-.9-2-2-2h-1V1h-2zm3 18H5V8h14v11z" fill-rule="evenodd"/></svg>
<div class="t" style="left:238.90px;width:200px;text-align:center;top:247.00px;line-height:6.00px;font-size:5.17px;color:#777;font-weight:normal;">Ficha de atendimento</div>
<div class="t" style="left:302.20px;width:200px;text-align:center;top:247.00px;line-height:6.00px;font-size:5.17px;color:#777;font-weight:normal;">Documentos</div>
<div class="t" style="left:361.70px;width:200px;text-align:center;top:247.00px;line-height:6.00px;font-size:5.17px;color:#222;font-weight:normal;">Anexos</div>
<div style="left:432.20px;top:256.90px;width:59.70px;height:1.30px;background:#20209a;"></div>
<div style="left:305.00px;top:258.20px;width:442.50px;height:14.70px;background:#002e54;"></div>
<div class="t" style="left:310.90px;top:262.00px;line-height:6.00px;font-size:5.3px;color:#fff;font-weight:bold;letter-spacing:0.172px;">Anexos</div>
<svg style="left:736.20px;top:262.30px;" width="7.00" height="7.00" viewBox="0 0 24 24"><path fill="#fff" d="M7.410 15.410L12 10.830l4.590 4.580L18 14l-6-6-6 6z"/></svg>
<div style="left:305.00px;top:272.90px;width:265.70px;height:23.60px;background:#fff;box-shadow:0 0.6px 0.8px rgba(0,0,0,.27);border-radius:0.8px;"></div>
<div style="left:575.80px;top:272.90px;width:171.70px;height:69.60px;background:#fff;box-shadow:0 0.6px 0.8px rgba(0,0,0,.27);border-radius:0.8px;"></div>
<div style="left:307.40px;top:281.60px;width:260.40px;height:11.40px;background:#e6e6e6;border:0.5px solid #cfcfcf;box-sizing:border-box;"></div>
<div style="left:343.10px;top:281.60px;width:0.50px;height:11.40px;background:#cfcfcf;"></div>
<div style="left:408.30px;top:281.60px;width:0.50px;height:11.40px;background:#cfcfcf;"></div>
<div style="left:461.50px;top:281.60px;width:0.50px;height:11.40px;background:#cfcfcf;"></div>
<div style="left:523.50px;top:281.60px;width:0.50px;height:11.40px;background:#cfcfcf;"></div>
<div class="t" style="left:309.80px;top:284.00px;line-height:6.00px;font-size:5.2px;color:#111;font-weight:bold;letter-spacing:0.050px;">Data</div>
<div class="t" style="left:345.00px;top:284.00px;line-height:6.00px;font-size:5.2px;color:#111;font-weight:bold;letter-spacing:-0.014px;">Descrição</div>
<div class="t" style="left:410.60px;top:284.00px;line-height:6.00px;font-size:5.2px;color:#111;font-weight:bold;letter-spacing:-0.068px;">Arquivo</div>
<div class="t" style="left:464.20px;top:284.00px;line-height:6.00px;font-size:5.2px;color:#111;font-weight:bold;letter-spacing:-0.011px;">Extensão</div>
<div class="t" style="left:525.80px;top:284.00px;line-height:6.00px;font-size:5.2px;color:#111;font-weight:bold;letter-spacing:-0.120px;">Ações</div>
<div style="left:578.70px;top:281.10px;width:73.70px;height:19.00px;background:#efefef;border-bottom:0.7px solid #c6c6c6;box-sizing:border-box;"></div>
<div class="t" style="left:582.60px;top:284.00px;line-height:5.00px;font-size:3.9px;color:#4a4450;font-weight:normal;letter-spacing:-0.131px;">Descrição *</div>
<div class="t" style="left:582.60px;top:290.00px;line-height:6.00px;font-size:5.18px;color:#222;font-weight:normal;">Não informado</div>
<div style="left:652.40px;top:286.20px;width:29.80px;height:13.90px;background:#002e54;border-radius:1px;"></div>
<div class="t" style="left:567.30px;width:200px;text-align:center;top:290.00px;line-height:6.00px;font-size:5.17px;color:#fff;font-weight:normal;">Arquivo</div>
<div style="left:578.70px;top:306.50px;width:35.40px;height:13.10px;background:#dcdcdc;border-radius:1px;"></div>
<svg style="left:584.90px;top:309.30px;" width="8.20" height="8.20" viewBox="0 0 24 24"><path fill="#000" d="M17 3H5c-1.110 0-2 .9-2 2v14c0 1.100.89 2 2 2h14c1.100 0 2-.9 2-2V7l-4-4zm-5 16c-1.660 0-3-1.340-3-3s1.340-3 3-3 3 1.340 3 3-1.340 3-3 3zm3-10H5V5h10v4z" fill-rule="evenodd"/></svg>
<div class="t" style="left:593.60px;top:310.00px;line-height:6.00px;font-size:5.17px;color:#222;font-weight:normal;">Enviar</div>
<div class="t" style="left:578.70px;top:325.00px;line-height:6.00px;font-size:5.16px;color:#111;font-weight:bold;">Arquivos permitidos:</div>
<div class="t" style="left:578.70px;top:333.00px;line-height:6.00px;font-size:5.15px;color:#222;font-weight:normal;">Imagens e documentos como .pdf, .doc, .jpg</div>
</main></body></html>
